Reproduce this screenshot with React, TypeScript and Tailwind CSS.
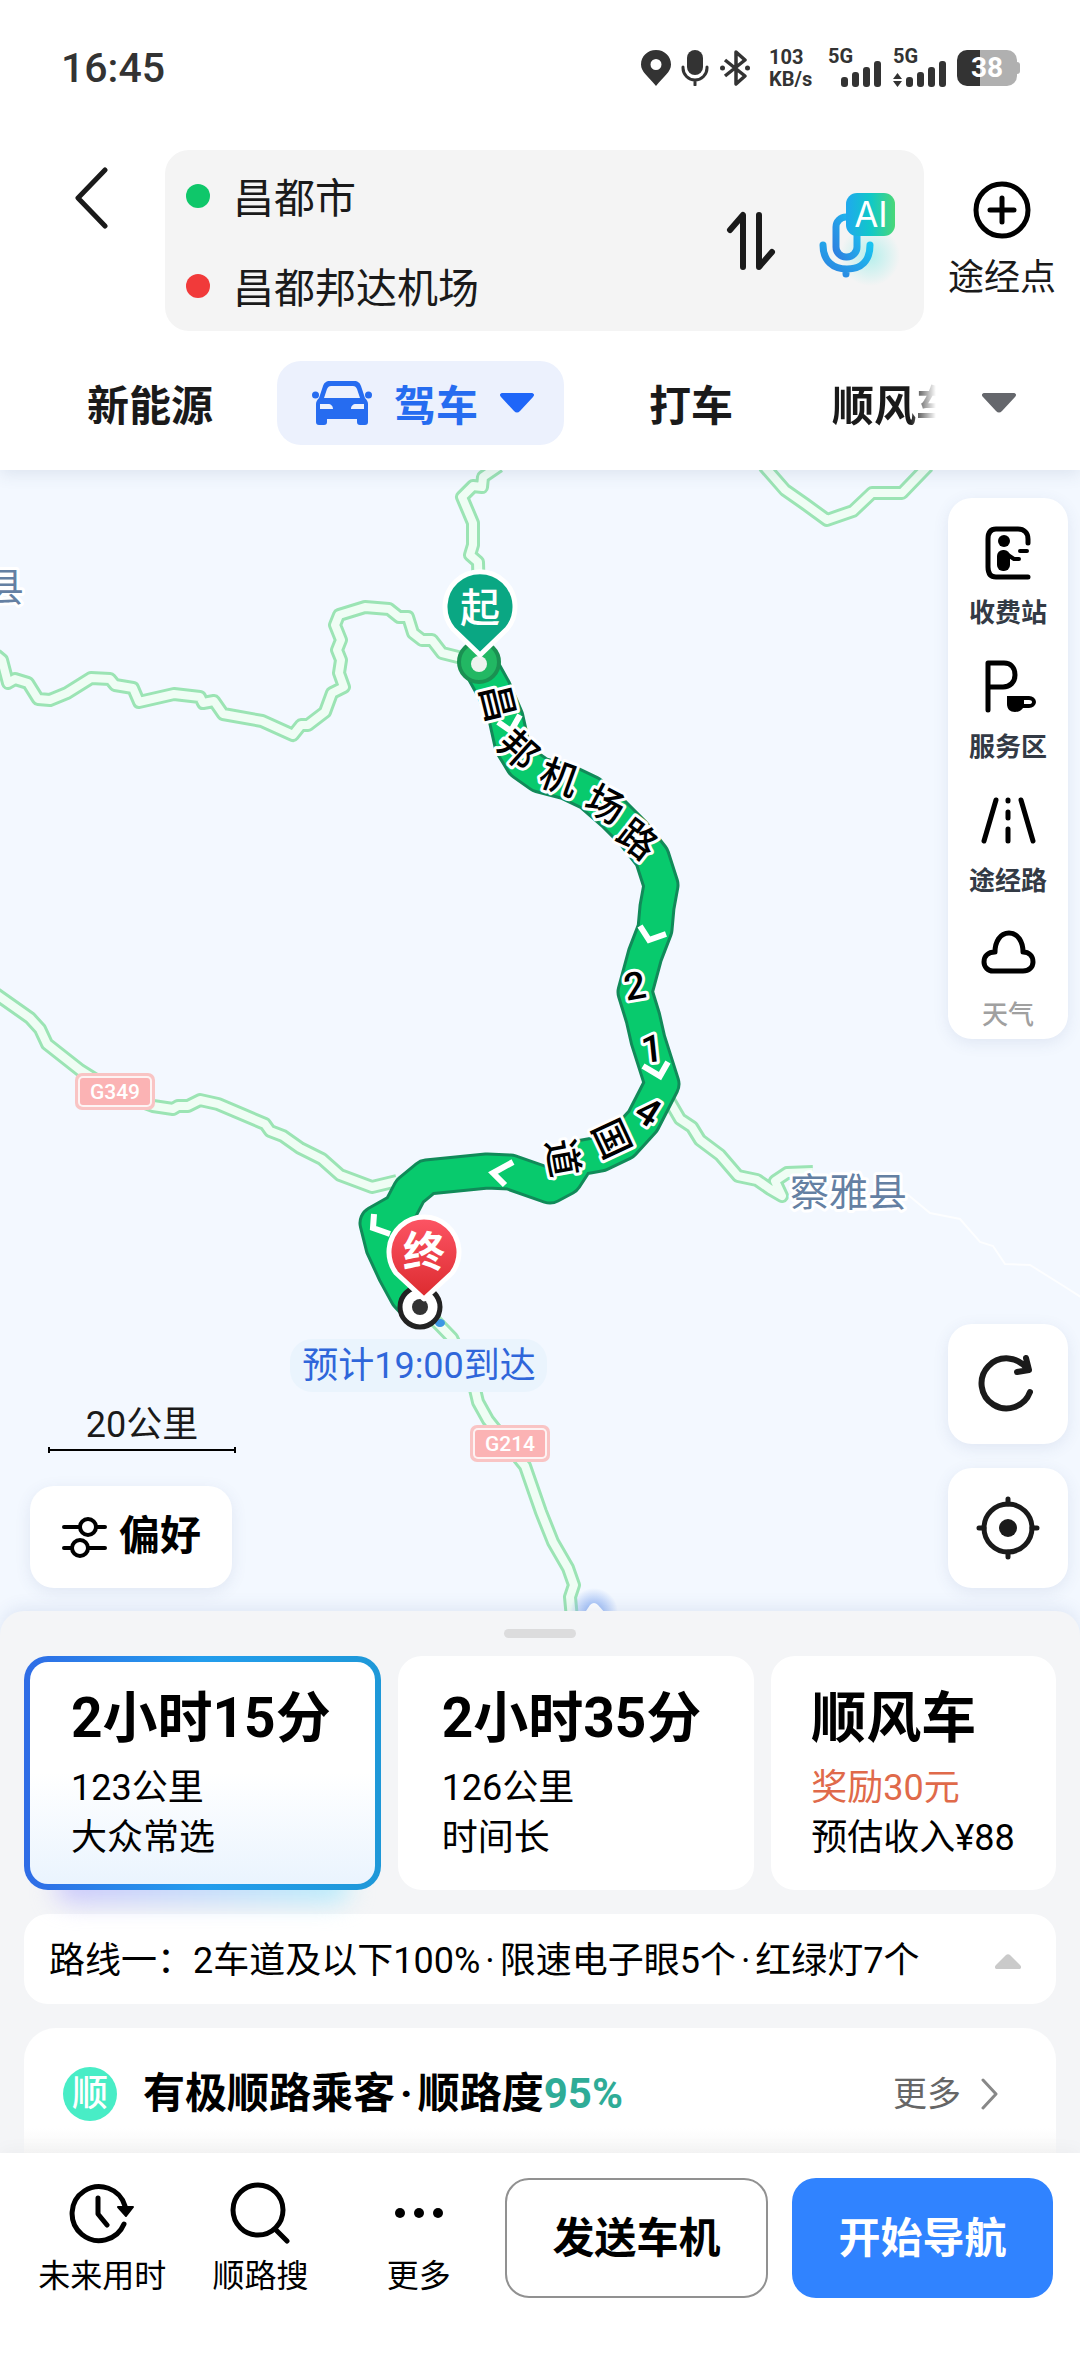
import type { ReactNode } from 'react';

const localRoads = [
  'M-4 655 L2 660 L8 683 L15 679 L28 683 L38 699 L50 700 L67 693 L91 678 L110 679 L115 685 L133 688 L139 702 L174 694 L200 697 L203 703 L214 701 L223 714 L262 721 L293 735 L301 725 L308 725 L325 712 L332 693 L344 687 L339 673 L341 660 L337 650 L341 640 L335 625 L339 615 L365 607 L389 609 L399 617 L408 617 L413 633 L422 640 L432 640 L442 653 L458 657 L478 662',
  'M499 466 L483 477 L482 487 L473 486 L462 497 L473 523 L473 545 L470 555 L478 562 L479 600',
  'M764 466 L785 490 L805 504 L827 520 L853 511 L872 493 L902 493 L928 466',
  'M-4 994 L30 1018 L40 1029 L47 1044 L80 1070 L115 1092 L153 1106 L173 1109 L178 1106 L188 1106 L200 1100 L218 1104 L265 1124 L270 1131 L283 1136 L300 1148 L322 1159 L340 1175 L372 1187 L397 1181',
  'M666 1095 L680 1119 L692 1127 L700 1140 L720 1155 L738 1176 L757 1180 L770 1189 L782 1196 L775 1181 L787 1173 L813 1172',
  'M425 1310 L452 1338 L474 1385 L478 1402 L488 1420 L525 1466 L541 1512 L553 1542 L568 1568 L574 1585 L570 1597 L574 1640',
];

const routePath =
  'M479 663 L494 690 L506 718 L512 745 L523 763 L540 775 L567 782 L590 793 L613 813 L633 833 L652 857 L661 885 L657 907 L655 929 L645 955 L635 992 L643 1018 L648 1040 L662 1084 L643 1121 L623 1143 L600 1154 L578 1158 L565 1178 L550 1186 L510 1172 L487 1171 L467 1173 L427 1177 L410 1191 L400 1210 L377 1223 L383 1247 L395 1273 L407 1295 L418 1307';

const arrows = [
  'M498 722 L511 731 L520 715',
  'M640 926 L649 940 L666 934',
  'M643 1066 L660 1076 L668 1062',
  'M513 1162 L493 1173 L505 1185',
  'M374 1214 L373 1228 L390 1234',
];

const roadChars = [
  { char: '昌', x: 497, y: 703, angle: 76 },
  { char: '邦', x: 518, y: 750, angle: 42 },
  { char: '机', x: 559, y: 778, angle: 20 },
  { char: '场', x: 605, y: 805, angle: 28 },
  { char: '路', x: 637, y: 840, angle: 38 },
  { char: '2', x: 635, y: 986, angle: -10 },
  { char: '1', x: 652, y: 1049, angle: -6 },
  { char: '4', x: 648, y: 1112, angle: 32 },
  { char: '国', x: 611, y: 1139, angle: 65 },
  { char: '道', x: 562, y: 1158, angle: 80 },
];

function RoadShield({ x, y, label }: { x: number; y: number; label: string }) {
  return (
    <g>
      <rect x={x} y={y} width="80" height="37" rx="7" fill="#f9c4c4" />
      <rect x={x + 3} y={y + 3} width="74" height="31" rx="5" fill="#fdf3f3" />
      <rect x={x + 5} y={y + 5} width="70" height="27" rx="3" fill="#fbb3b4" />
      <text x={x + 40} y={y + 26} textAnchor="middle" fontSize="21" fontWeight="500" fill="#fff">
        {label}
      </text>
    </g>
  );
}

function RouteMap() {
  return (
    <svg className="absolute inset-0 w-full h-full" viewBox="0 470 1080 1165" preserveAspectRatio="xMidYMin slice" role="img" aria-label="路线地图">
      <defs>
        <linearGradient id="endPin" x1="0" y1="0" x2="0" y2="1">
          <stop offset="0" stopColor="#fd5565" />
          <stop offset="1" stopColor="#dc2a2e" />
        </linearGradient>
        <radialGradient id="glow">
          <stop offset="0.2" stopColor="#9dbcf5" />
          <stop offset="1" stopColor="#9dbcf5" stopOpacity="0" />
        </radialGradient>
      </defs>

      <path d="M907 1194 L930 1213 L960 1219 L980 1242 L993 1246 L1005 1264 L1030 1265 L1062 1285 L1084 1299" fill="none" stroke="#fff" strokeWidth="2" opacity="0.8" />
      {localRoads.map((d) => (
        <g key={d} fill="none" strokeLinejoin="round">
          <path d={d} stroke="#9be4b4" strokeWidth="14" />
          <path d={d} stroke="#effdf4" strokeWidth="8" />
        </g>
      ))}
      <circle cx="594" cy="1612" r="24" fill="url(#glow)" />
      <path d="M584 1614 L590 1605 Q594 1601 598 1605 L606 1614 Z" fill="#fff" />

      <RoadShield x={75} y={1073} label="G349" />
      <RoadShield x={470} y={1425} label="G214" />

      <g fontSize="39" fill="#6480a3" stroke="#fff" strokeWidth="6" strokeLinejoin="round" paintOrder="stroke">
        <text x="790" y="1206">察雅县</text>
        <text x="-15" y="601">县</text>
      </g>

      <g fill="none" strokeLinejoin="round" strokeLinecap="round">
        <path d={routePath} stroke="#118a59" strokeWidth="37" />
        <path d={routePath} stroke="#08ca6d" strokeWidth="31" />
        {arrows.map((d) => (
          <path key={d} d={d} stroke="#fff" strokeWidth="6" strokeLinecap="butt" strokeLinejoin="miter" />
        ))}
      </g>

      {roadChars.map(({ char, x, y, angle }) => (
        <text
          key={char}
          transform={`translate(${x} ${y}) rotate(${angle})`}
          y="13"
          textAnchor="middle"
          fontSize="38"
          fontWeight="500"
          fill="#000"
          stroke="#fff"
          strokeWidth="6"
          strokeLinejoin="round"
          paintOrder="stroke"
        >
          {char}
        </text>
      ))}

      {/* start */}
      <circle cx="479" cy="662" r="20" fill="#22b863" stroke="#1a9152" strokeWidth="4" />
      <circle cx="479" cy="664" r="8" fill="#eef3ee" />
      <path d="M480 655 L453 629 A35 35 0 1 1 507 629 Z" fill="#0aa783" stroke="#fff" strokeWidth="5" strokeLinejoin="round" />
      <text x="480" y="622" textAnchor="middle" fontSize="40" fontWeight="500" fill="#fff">
        起
      </text>

      {/* destination */}
      <ellipse cx="440" cy="1323" rx="5" ry="4" fill="#3d97e4" />
      <circle cx="420" cy="1307" r="20" fill="#fff" stroke="#222" strokeWidth="5" />
      <circle cx="420" cy="1307" r="8" fill="#333" />
      <path d="M424 1299 L396 1273 A35 35 0 1 1 452 1273 Z" fill="url(#endPin)" stroke="#fff" strokeWidth="5" strokeLinejoin="round" />
      <text x="424" y="1267" textAnchor="middle" fontSize="42" fontWeight="700" fill="#fff">
        终
      </text>

      <rect x="290" y="1339" width="257" height="53" rx="22" fill="#eaf4fd" />
      <text x="419" y="1378" textAnchor="middle" fontSize="36" fill="#2f66da">
        预计19:00到达
      </text>
    </svg>
  );
}

function SignalBars() {
  return (
    <svg width="41" height="26" viewBox="0 0 41 26" fill="#333">
      <rect x="0" y="16" width="7" height="10" rx="3" />
      <rect x="11" y="11" width="7" height="15" rx="3" />
      <rect x="22" y="6" width="7" height="20" rx="3" />
      <rect x="33" y="0" width="7" height="26" rx="3" />
    </svg>
  );
}

function StatusBar() {
  return (
    <div className="flex h-[136px] items-center justify-between pl-[61px] pr-[60px] text-[#333]">
      <span className="text-[41px] font-medium leading-none">16:45</span>
      <div className="flex items-center">
        <svg width="30" height="36" viewBox="0 0 30 36" fill="#333">
          <path fillRule="evenodd" d="M15 0C6.500 0 0 6.300 0 14.500 0 22 7 26 15 36 23 26 30 22 30 14.500 30 6.300 23.500 0 15 0ZM15 9a5.500 5.500 0 1 1 0 11 5.500 5.500 0 0 1 0-11Z" />
        </svg>
        <svg className="ml-[10px]" width="28" height="36" viewBox="0 0 28 36" fill="none" stroke="#333" strokeWidth="3" strokeLinecap="round">
          <rect x="6" y="0" width="16" height="25" rx="8" fill="#333" stroke="none" />
          <path d="M2 17v1a12 12 0 0 0 24 0v-1M14 30v5" />
        </svg>
        <svg className="ml-[11px]" width="30" height="36" viewBox="0 0 30 36" fill="none" stroke="#333" strokeWidth="3.500" strokeLinejoin="round">
          <path d="M5 10l20 16-9 8V2l9 8L5 26" />
          <circle cx="2.500" cy="18" r="2.500" fill="#333" stroke="none" />
          <circle cx="27.500" cy="18" r="2.500" fill="#333" stroke="none" />
        </svg>
        <div className="ml-[19px] flex w-[43px] flex-col text-[20px] font-bold leading-[22px]">
          <span>103</span>
          <span>KB/s</span>
        </div>
        <div className="ml-[16px] flex flex-col items-start">
          <span className="h-[12px] text-[20px] font-bold leading-[14px]">5G</span>
          <span className="pl-[13px]"><SignalBars /></span>
        </div>
        <div className="ml-[11px] flex flex-col items-start">
          <span className="h-[12px] text-[20px] font-bold leading-[14px]">5G</span>
          <span className="flex items-end gap-1">
            <svg width="9" height="14" viewBox="0 0 9 14" fill="#333">
              <path d="M4.500 0L9 6H0ZM4.500 14L9 8H0Z" />
            </svg>
            <SignalBars />
          </span>
        </div>
        <div className="ml-[10px] flex items-center">
          <div className="flex h-[36px] w-[60px] items-center justify-center rounded-[10px] bg-[linear-gradient(90deg,#333_38%,#b0b0b0_38%)] text-[28px] font-bold leading-none text-white">
            38
          </div>
          <div className="h-[12px] w-[3px] rounded-r bg-[#b0b0b0]" />
        </div>
      </div>
    </div>
  );
}

function SearchHeader() {
  return (
    <div className="flex mt-[14px] font-['Noto_Sans_CJK_SC',sans-serif]">
      <button aria-label="返回" className="w-[165px] shrink-0 pl-[74px] pt-[17px] flex items-start">
        <svg width="34" height="62" viewBox="0 0 34 62" fill="none" stroke="#1a1a1a" strokeWidth="5" strokeLinecap="round" strokeLinejoin="round">
          <path d="M31 3L4 31l27 28" />
        </svg>
      </button>
      <div className="flex flex-1 items-center rounded-[24px] bg-[#f4f4f4] pl-[21px] pr-[24px]">
        <div className="flex-1">
          <label className="flex h-[91px] items-center gap-[23px]">
            <span className="h-6 w-6 rounded-full bg-[#0fc76a]" />
            <input aria-label="起点" defaultValue="昌都市" className="w-0 flex-1 bg-transparent text-[41px] text-[#1a1a1a] outline-none" />
          </label>
          <label className="flex h-[90px] items-center gap-[23px]">
            <span className="h-6 w-6 rounded-full bg-[#f13a3a]" />
            <input aria-label="终点" defaultValue="昌都邦达机场" className="w-0 flex-1 bg-transparent text-[41px] text-[#1a1a1a] outline-none" />
          </label>
        </div>
        <button aria-label="交换起终点">
          <svg width="50" height="60" viewBox="0 0 50 60" fill="none" stroke="#1a1a1a" strokeWidth="6" strokeLinecap="round" strokeLinejoin="round">
            <path d="M4 19L17 4v52M33 4v52L46 41" />
          </svg>
        </button>
        <button aria-label="AI语音" className="ml-[42px]">
          <svg width="82" height="100" viewBox="0 5 82 100">
            <defs>
              <linearGradient id="micStroke" x1="0" y1="1" x2="1" y2="0">
                <stop offset="0" stopColor="#2f7fe0" />
                <stop offset="1" stopColor="#1ac3f0" />
              </linearGradient>
              <linearGradient id="aiBadge" x1="0" y1="0" x2="1" y2="0">
                <stop offset="0" stopColor="#20a8ee" />
                <stop offset="0.5" stopColor="#10c8c8" />
                <stop offset="1" stopColor="#4ad777" />
              </linearGradient>
              <radialGradient id="micGlow">
                <stop offset="0" stopColor="#b5efec" />
                <stop offset="1" stopColor="#b5efec" stopOpacity="0" />
              </radialGradient>
            </defs>
            <circle cx="52" cy="70" r="30" fill="url(#micGlow)" />
            <g fill="none" stroke="url(#micStroke)" strokeWidth="7" strokeLinecap="round">
              <rect x="18" y="31" width="21" height="40" rx="10" />
              <path d="M5 59c0 16 10 24 24 24s23-8 23-24M28 83v5" />
            </g>
            <rect x="28" y="7" width="49" height="43" rx="11" fill="url(#aiBadge)" />
            <text x="53" y="41" textAnchor="middle" fontSize="35" fontFamily="Inter, sans-serif" fill="#fff">
              AI
            </text>
          </svg>
        </button>
      </div>
      <button className="flex w-[156px] shrink-0 flex-col items-center gap-[10px] pt-[31px] text-[36px] leading-[50px] text-[#1a1a1a]">
        <svg width="58" height="58" viewBox="0 0 58 58" fill="none" stroke="#000" strokeWidth="5" strokeLinecap="round">
          <circle cx="29" cy="29" r="26" />
          <path d="M29 17v24M17 29h24" />
        </svg>
        途经点
      </button>
    </div>
  );
}

function TravelTabs() {
  return (
    <nav className="mt-[30px] flex items-center font-['Noto_Sans_CJK_SC',sans-serif] text-[42px] font-bold leading-[84px] text-[#1a1a1a]">
      <button className="ml-[87px]">新能源</button>
      <button className="ml-[64px] flex items-center rounded-[24px] bg-[#ecf1fd] pl-[35px] pr-[30px] text-[#266cf0]">
        <svg width="60" height="44" viewBox="0 0 60 44" fill="#266cf0">
          <path
            fillRule="evenodd"
            d="M18 0h24c4 0 6 2 7 5l4 12c2 2 3 4 3 6v18c0 2-1 3-3 3h-5c-2 0-3-1-3-3v-3H15v3c0 2-1 3-3 3H7c-2 0-3-1-3-3V23c0-2 1-4 3-6l4-12c1-3 3-5 7-5ZM19 5c-2 0-3 1-4 3l-3 9h36l-3-9c-1-2-2-3-4-3ZM8 23v5h13c0-3-2-5-5-5ZM52 23v5H39c0-3 2-5 5-5Z"
          />
          <circle cx="3.500" cy="14" r="3.500" />
          <circle cx="56.500" cy="14" r="3.500" />
        </svg>
        <span className="ml-[22px]">驾车</span>
        <svg className="ml-[22px]" width="34" height="20" viewBox="0 0 34 20" fill="#1f66f8">
          <path d="M3 0h28c3 0 4 2 2 4L20 18c-2 2-4 2-6 0L1 4C-1 2 0 0 3 0Z" />
        </svg>
      </button>
      <button className="ml-[85px]">打车</button>
      <button className="ml-[99px] w-[104px] overflow-hidden whitespace-nowrap text-left mask-r-from-75% mask-r-to-100%">顺风车</button>
      <button aria-label="展开" className="ml-[45px]">
        <svg width="36" height="20" viewBox="0 0 34 20" fill="#65676c">
          <path d="M3 0h28c3 0 4 2 2 4L20 18c-2 2-4 2-6 0L1 4C-1 2 0 0 3 0Z" />
        </svg>
      </button>
    </nav>
  );
}

function LayerButton({ label, muted, children }: { label: string; muted?: boolean; children: ReactNode }) {
  return (
    <button className="flex flex-col items-center">
      <svg width="56" height="56" viewBox="0 0 56 56" fill="none" stroke="#000" strokeWidth="5" strokeLinecap="round" strokeLinejoin="round">
        {children}
      </svg>
      <span className={muted ? 'mt-[14px] text-[26px] leading-[36px] font-medium text-[#a0a0a0]' : 'mt-[14px] text-[26px] leading-[36px] font-bold text-[#333a45]'}>
        {label}
      </span>
    </button>
  );
}

function MapOverlay() {
  return (
    <div className="absolute inset-0 flex justify-between pb-[47px] pl-[30px] pr-3 pt-[28px]">
      <div className="flex flex-col items-start justify-end">
        <div className="ml-[18px] w-[188px] text-center text-[36px] leading-[44px] text-[#1a1a1a]">
          20公里
          <div className="flex h-[6px] items-center border-x-2 border-black">
            <div className="h-[2px] w-full bg-black" />
          </div>
        </div>
        <button className="mt-[33px] flex h-[102px] items-center gap-[12px] rounded-[24px] bg-white px-[31px] text-[41px] font-bold text-black shadow-[0_4px_16px_rgba(60,80,140,0.1)]">
          <svg width="46" height="42" viewBox="0 0 46 42" fill="none" stroke="#000" strokeWidth="4" strokeLinecap="round">
            <path d="M3 11h16M35 11h9M3 32h8M27 32h17" />
            <circle cx="27" cy="11" r="8" />
            <circle cx="19" cy="32" r="8" />
          </svg>
          偏好
        </button>
      </div>
      <div className="flex w-[120px] flex-col">
        <div className="flex flex-col items-center gap-[28px] rounded-[24px] bg-white pb-[6px] pt-[27px] shadow-[0_4px_16px_rgba(60,80,140,0.1)]">
          <LayerButton label="收费站">
            <path d="M48 18v-4c0-6-4-10-10-10H16C10 4 8 8 8 14v28c0 6 2 10 8 10h32" />
            <circle cx="24" cy="16" r="6" fill="#000" stroke="none" />
            <rect x="17" y="25" width="13" height="21" rx="6" fill="#000" stroke="none" />
            <path d="M28 30l6 4h5M40 26h7" strokeWidth="4" />
          </LayerButton>
          <LayerButton label="服务区">
            <path d="M8 51V4h16c7 0 11 5 11 12s-5 12-12 12H10" />
            <path d="M27 37h17v8c0 5-4 8-9 8s-8-3-8-8Z" fill="#000" stroke="none" />
            <path d="M44 39h5c3 0 5 2 5 4s-2 4-5 4h-6" strokeWidth="4" />
          </LayerButton>
          <LayerButton label="途经路">
            <path d="M16 7L4 48M41 7l12 41M28 7v1M28 19v6M28 36v12" />
          </LayerButton>
          <LayerButton label="天气" muted>
            <path d="M13 44h30c6 0 10-4 10-9 0-6-4-10-10-10C43 15 38 6 29 6S15 15 15 25C8 25 4 29 4 35c0 5 4 9 9 9Z" />
          </LayerButton>
        </div>
        <div className="mt-auto flex flex-col gap-6">
          <button aria-label="刷新" className="flex h-[120px] items-center justify-center rounded-[24px] bg-white shadow-[0_4px_16px_rgba(60,80,140,0.1)]">
            <svg width="60" height="60" viewBox="0 0 60 60" fill="none" stroke="#1a1a1a" strokeWidth="6" strokeLinecap="round" strokeLinejoin="round">
              <path d="M52 38A25 25 0 1 1 49 15M48 4l3 12-12 2" />
            </svg>
          </button>
          <button aria-label="定位" className="flex h-[120px] items-center justify-center rounded-[24px] bg-white shadow-[0_4px_16px_rgba(60,80,140,0.1)]">
            <svg width="66" height="66" viewBox="0 0 66 66" fill="none" stroke="#1a1a1a" strokeWidth="5" strokeLinecap="round">
              <circle cx="33" cy="33" r="24" />
              <path d="M33 4v5M33 57v5M4 33h5M57 33h5" />
              <circle cx="33" cy="33" r="9" fill="#1a1a1a" stroke="none" />
            </svg>
          </button>
        </div>
      </div>
    </div>
  );
}

function RouteCards() {
  return (
    <div className="grid grid-cols-[357fr_357fr_285fr] gap-[17px] text-left text-[36px] leading-[50px] text-black">
      <div className="relative">
        <div className="absolute inset-x-8 -bottom-3 h-8 rounded-full bg-linear-to-r from-[#c9c4fb] to-[#b4ecfb] blur-md" />
        <button className="relative block w-full rounded-[24px] bg-linear-to-r from-[#2f6ce6] via-[#239ded] to-[#1e98d8] p-[6px] text-left">
          <div className="rounded-[18px] bg-linear-to-b from-white from-50% to-[#eaf4fe] pb-[21px] pl-[41px] pt-[20px]">
            <h2 className="mb-[9px] text-[55px] font-bold leading-[72px]">2小时15分</h2>
            <p>123公里</p>
            <p>大众常选</p>
          </div>
        </button>
      </div>
      <button className="rounded-[24px] bg-white pb-[27px] pl-[44px] pt-[26px] text-left">
        <h2 className="mb-[9px] text-[55px] font-bold leading-[72px]">2小时35分</h2>
        <p>126公里</p>
        <p>时间长</p>
      </button>
      <button className="whitespace-nowrap rounded-[24px] bg-white pb-[27px] pl-[40px] pt-[26px] text-left">
        <h2 className="mb-[9px] text-[55px] font-bold leading-[72px]">顺风车</h2>
        <p className="text-[#e06a4a]">奖励30元</p>
        <p>预估收入¥88</p>
      </button>
    </div>
  );
}

function Dot() {
  return <span className="mx-[5px]">·</span>;
}

function BottomSheet() {
  return (
    <section className="relative -mt-6 rounded-t-[24px] bg-[#f4f5f7] px-6 pt-[18px] shadow-[0_-4px_16px_rgba(60,90,160,0.1)]">
      <div className="mx-auto mb-[18px] h-[9px] w-[72px] rounded-full bg-[#dcdcdd]" />
      <RouteCards />
      <button className="mt-6 flex w-full items-center justify-between rounded-[24px] bg-white pb-[18px] pl-[25px] pr-[35px] pt-[22px] text-[36px] leading-[50px] text-black">
        <span>
          路线一：2车道及以下100%<Dot />限速电子眼5个<Dot />红绿灯7个
        </span>
        <svg width="26" height="15" viewBox="0 0 26 15" fill="#cacaca">
          <path d="M2 15h22c2 0 3-2 1-4L15 1c-1-1-3-1-4 0L1 11c-2 2-1 4 1 4Z" />
        </svg>
      </button>
      <div className="mt-6 flex items-center rounded-t-[32px] bg-linear-to-b from-white from-80% to-[#f7f7f7] pb-[31px] pl-[39px] pr-[58px] pt-[37px]">
        <span className="flex h-[54px] w-[54px] items-center justify-center rounded-full bg-[#48edc6] text-[36px] font-medium leading-none text-white">顺</span>
        <h3 className="ml-[26px] text-[42px] font-bold leading-[57px] text-black">
          有极顺路乘客<Dot />顺路度<span className="text-[#2fac97]">95%</span>
        </h3>
        <a href="#more" className="ml-auto flex items-center gap-[20px] text-[34px] leading-[50px] text-[#666]">
          更多
          <svg width="17" height="32" viewBox="0 0 17 32" fill="none" stroke="#888" strokeWidth="3" strokeLinecap="round" strokeLinejoin="round">
            <path d="M2 2l13 14L2 30" />
          </svg>
        </a>
      </div>
    </section>
  );
}

function ActionBar() {
  return (
    <footer className="relative flex items-start bg-white pb-[61px] pl-[23px] pr-[27px] pt-[25px] shadow-[0_-4px_16px_rgba(0,0,0,0.03)]">
      <div className="grid flex-1 grid-cols-3 text-[32px] leading-[46px] text-black">
        <button className="flex flex-col items-center gap-[9px] pt-[4px]">
          <svg width="66" height="62" viewBox="0 0 66 62" fill="none" stroke="#000" strokeWidth="5" strokeLinecap="round" strokeLinejoin="round">
            <path d="M56 24A27 27 0 1 0 55 42M29 16v16l9 11" />
            <path d="M49 25l8 9 7-9Z" fill="#000" strokeWidth="2" />
          </svg>
          未来用时
        </button>
        <button className="flex flex-col items-center gap-[9px] pt-[4px]">
          <svg width="62" height="62" viewBox="0 0 62 62" fill="none" stroke="#000" strokeWidth="5" strokeLinecap="round">
            <circle cx="29" cy="28" r="25" />
            <path d="M46 47l12 12" />
          </svg>
          顺路搜
        </button>
        <button className="flex flex-col items-center gap-[9px] pt-[4px]">
          <svg width="62" height="62" viewBox="0 0 62 62" fill="#000">
            <circle cx="12" cy="31" r="5" />
            <circle cx="31" cy="31" r="5" />
            <circle cx="50" cy="31" r="5" />
          </svg>
          更多
        </button>
      </div>
      <button className="ml-[7px] h-[120px] w-[263px] rounded-[24px] border-2 border-[#919191] bg-white text-[42px] font-bold text-black">发送车机</button>
      <button className="ml-6 h-[120px] w-[261px] rounded-[24px] bg-[#3083ff] text-[42px] font-bold text-white">开始导航</button>
    </footer>
  );
}

export default function App() {
  return (
    <div className="flex min-h-screen flex-col bg-white font-[Roboto,'Noto_Sans_CJK_SC',sans-serif]">
      <header className="relative z-10 bg-white pb-[25px] shadow-[0_4px_16px_rgba(60,80,120,0.12)]">
        <StatusBar />
        <SearchHeader />
        <TravelTabs />
      </header>
      <main className="relative min-h-[1000px] flex-1 overflow-hidden bg-[#f3f8ff]">
        <RouteMap />
        <MapOverlay />
      </main>
      <BottomSheet />
      <ActionBar />
    </div>
  );
}
